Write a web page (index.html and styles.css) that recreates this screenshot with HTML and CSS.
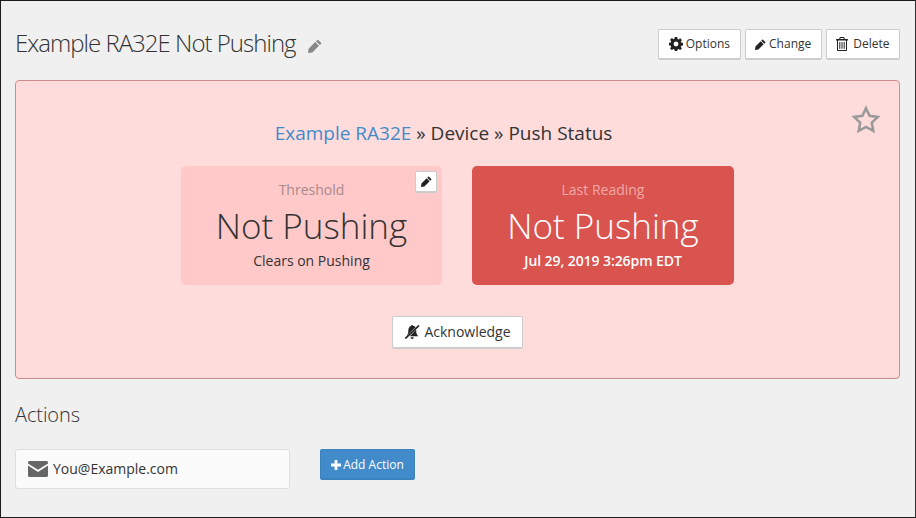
FILE: index.html
```html
<!DOCTYPE html>
<html lang="en">
<head>
<meta charset="utf-8">
<title>Example RA32E Not Pushing</title>
<link rel="stylesheet" href="styles.css">
</head>
<body>
<div class="frame">
  <header class="head">
    <h1 class="title">Example RA32E Not Pushing
      <svg class="title-edit" viewBox="0 0 14 14"><path d="M10.200.9l2.900 2.900c.3.3.3.7 0 1L11.800 6 8 2.200l1.200-1.300c.3-.3.7-.3 1 0zM7.200 3L11 6.800 4.300 13.500.6 14c-.3 0-.6-.3-.5-.6l.5-3.700z"/></svg>
    </h1>
    <div class="tools">
      <button class="btn"><svg class="ic" viewBox="0 0 14 14"><path fill-rule="evenodd" d="M5.800 0h2.400l.4 2 .9.4 1.700-1.100 1.700 1.700-1.100 1.700.4.900 1.800.4v2.400l-1.800.4-.4.900 1.100 1.700-1.700 1.700-1.700-1.100-.9.4-.4 1.800H5.800l-.4-1.800-.9-.4-1.700 1.100-1.700-1.700 1.100-1.700-.4-.9L0 8.200V5.800l1.800-.4.4-.9-1.100-1.700L2.800 1.100l1.700 1.100.9-.4zM7 4.600a2.400 2.400 0 1 0 0 4.800 2.400 2.400 0 0 0 0-4.800z"/></svg>Options</button>
      <button class="btn"><svg class="ic ic-sm" viewBox="0 0 14 14"><path d="M10.200.9l2.900 2.900c.3.3.3.7 0 1L11.800 6 8 2.200l1.200-1.300c.3-.3.7-.3 1 0zM7.200 3L11 6.800 4.300 13.500.6 14c-.3 0-.6-.3-.5-.6l.5-3.700z"/></svg>Change</button>
      <button class="btn"><svg class="ic ic-trash" viewBox="0 0 12 14"><path fill-rule="evenodd" d="M4 0h4l1 2h2.500c.3 0 .5.200.5.500V3.500h-1V13c0 .6-.4 1-1 1H2c-.6 0-1-.4-1-1V3.500H0V2.500c0-.3.200-.5.500-.5H3zm.6 1L4.200 2h3.600l-.4-1zM2 3.500V13h8V3.500zM3.300 5h1v6.800h-1zm2.200 0h1v6.800h-1zm2.200 0h1v6.800h-1z"/></svg>Delete</button>
    </div>
  </header>

  <section class="alert">
    <svg class="star" viewBox="0 0 30 30"><path d="M15 3.200l3.600 7.600 8.300 1.100-6.100 5.800 1.500 8.200-7.300-4-7.300 4 1.500-8.200-6.100-5.800 8.300-1.100z"/></svg>
    <h2 class="crumb"><a class="crumb-link" href="#">Example RA32E</a> » Device » Push Status</h2>
    <div class="cards">
      <div class="card card-threshold">
        <button class="card-edit"><svg viewBox="0 0 14 14"><path d="M10.200.9l2.900 2.900c.3.3.3.7 0 1L11.800 6 8 2.200l1.200-1.300c.3-.3.7-.3 1 0zM7.200 3L11 6.800 4.300 13.500.6 14c-.3 0-.6-.3-.5-.6l.5-3.700z"/></svg></button>
        <div class="card-label">Threshold</div>
        <div class="card-value">Not Pushing</div>
        <div class="card-note">Clears on Pushing</div>
      </div>
      <div class="card card-reading">
        <div class="card-label">Last Reading</div>
        <div class="card-value">Not Pushing</div>
        <div class="card-note card-date">Jul 29, 2019 3:26pm EDT</div>
      </div>
    </div>
    <div class="ack-row">
      <button class="btn btn-ack"><svg class="ic-ack" viewBox="0 0 16 14"><path d="M14.300 0l1.400 1.100L2 14 .6 12.900zM8.100 0c.5 0 .9.300.9.700 1.100.2 2 .7 2.600 1.400L2.700 10.700c.9-1 1.600-2.500 1.600-5.200C4.300 3.300 5.600 1.200 7.200.7c0-.4.400-.7.900-.7zM12.100 4.800c.1.300.1.500.1.800 0 3.300 1 4.700 2 5.700H5.800zM6.600 12.300h3.100c0 .9-.7 1.700-1.600 1.700s-1.500-.8-1.500-1.700z"/></svg>Acknowledge</button>
    </div>
  </section>

  <h3 class="section">Actions</h3>
  <div class="actions">
    <div class="action-item">
      <svg class="mail" viewBox="0 0 20 16"><path d="M1.500 0h17C19.300 0 20 .7 20 1.500v.9l-10 6.300L0 2.400v-.9C0 .7.700 0 1.500 0zM0 4.600l10 6.300 10-6.300v9.900c0 .8-.7 1.500-1.500 1.500h-17C.7 16 0 15.300 0 14.500z"/></svg>
      <span>You@Example.com</span>
    </div>
    <button class="btn-add"><svg class="plus" viewBox="0 0 10 10"><path d="M3.600 0h2.800v3.600H10v2.800H6.400V10H3.600V6.400H0V3.600h3.600z"/></svg>Add Action</button>
  </div>
</div>
</body>
</html>
```
FILE: styles.css
```css
* { box-sizing: border-box; }
html, body { margin: 0; height: 100%; }
body {
  font-family: "Open Sans", "Liberation Sans", sans-serif;
  color: #333;
  background: #f0f0f0;
  overflow: hidden;
}
.frame {
  height: 518px;
  border: 1px solid #1c1c1c;
  border-right-color: #333;
  padding: 0 15px 0 14px;
  background: #f0f0f0;
}
.head {
  height: 79px;
  display: flex;
  justify-content: space-between;
  align-items: flex-start;
}
.title {
  margin: 24px 0 0;
  font-size: 24px;
  line-height: 36px;
  font-weight: 300;
  letter-spacing: -.98px;
  color: #333;
}
.title-edit { width: 14px; height: 14px; fill: #888; margin-left: 7px; vertical-align: -1px; }
.tools { display: flex; gap: 4px; margin-top: 28px; }
.btn {
  display: inline-flex;
  align-items: center;
  font: 400 12px/16px "Open Sans", sans-serif;
  color: #333;
  background: #fff;
  border: 1px solid #ccc;
  border-bottom-width: 2px;
  border-radius: 2px;
  height: 31px;
  padding: 0 9.5px;
}
.ic { width: 14px; height: 14px; fill: #222; margin-right: 3px; }
.ic-sm { width: 11px; height: 11px; }
.ic-trash { width: 12px; margin-right: 5px; }
.alert {
  position: relative;
  height: 299px;
  background: #ffdcdc;
  border: 1px solid #cf8b8b;
  border-radius: 4px;
  padding-top: 40px;
}
.star {
  position: absolute;
  top: 24px;
  right: 18px;
  width: 30px;
  height: 30px;
  fill: none;
  stroke: #999;
  stroke-width: 2.500;
}
.crumb {
  margin: 0;
  padding-right: 28px;
  text-align: center;
  font-size: 19px;
  line-height: 24px;
  font-weight: 400;
  color: #333;
}
.crumb-link { color: #428bca; text-decoration: none; }
.cards { display: flex; justify-content: center; gap: 30px; margin-top: 21px; }
.card {
  position: relative;
  width: 261px;
  height: 119px;
  border-radius: 5px;
  text-align: center;
  padding-top: 14px;
}
.card-threshold { background: #ffc9c9; }
.card-reading { background: #d9534f; width: 262px; color: #fff; }
.card-label { font-size: 14px; line-height: 19px; color: #a98a8a; }
.card-reading .card-label { color: #f2a9a7; }
.card-value { font-size: 35px; line-height: 46px; font-weight: 300; margin-top: 4px; }
.card-note { font-size: 14px; line-height: 19px; margin-top: 2px; }
.card-date { font-weight: 600; letter-spacing: -.08px; }
.card-edit {
  position: absolute;
  top: 5px;
  right: 5px;
  width: 22px;
  height: 22px;
  padding: 0;
  display: flex;
  align-items: center;
  justify-content: center;
  background: #fff;
  border: 1px solid #ccc;
  border-bottom-width: 2px;
  border-radius: 2px;
}
.card-edit svg { width: 11px; height: 11px; fill: #222; }
.ack-row { display: flex; justify-content: center; margin-top: 31px; }
.btn-ack { height: 33px; font-size: 14px; padding: 0 11.5px; }
.ic-ack { width: 16px; height: 14px; fill: #222; margin-right: 4px; }
.section {
  margin: 22px 0 0;
  font-size: 20px;
  line-height: 28px;
  font-weight: 300;
  letter-spacing: -.1px;
  color: #333;
}
.actions { display: flex; align-items: flex-start; margin-top: 20px; gap: 30px; }
.action-item {
  width: 275px;
  height: 40px;
  display: flex;
  align-items: center;
  gap: 5px;
  padding: 0 0 2px 12px;
  background: #fbfbfb;
  border: 1px solid #ddd;
  border-radius: 3px;
  font-size: 14px;
  color: #333;
}
.mail { width: 20px; height: 16px; fill: #666; margin-top: 2px; }
.btn-add {
  display: inline-flex;
  align-items: center;
  justify-content: center;
  width: 95px;
  height: 31px;
  padding: 1px 0 0;
  background: #428bca;
  border: 1px solid #3c82bf;
  border-bottom-width: 2px;
  border-radius: 2px;
  color: #fff;
  font: 400 12px/16px "Open Sans", sans-serif;
}
.plus { width: 10px; height: 10px; fill: #fff; margin-right: 2px; }
```
